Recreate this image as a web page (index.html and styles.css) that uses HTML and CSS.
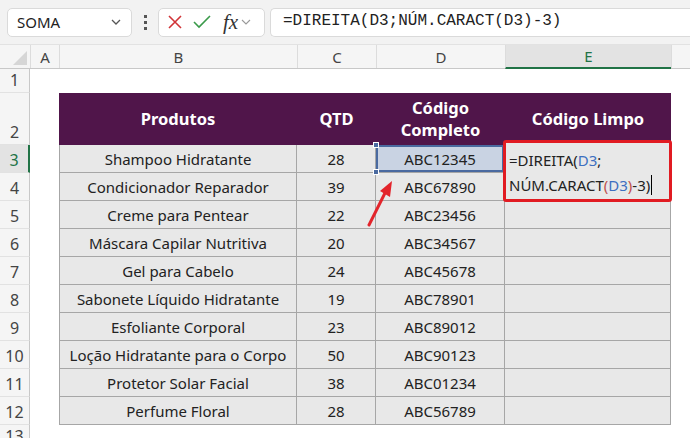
FILE: index.html
```html
<!DOCTYPE html>
<html lang="pt-BR">
<head>
    <meta charset="UTF-8">
    <title>DIREITA + NÚM.CARACT</title>
    <link rel="stylesheet" href="styles.css">
</head>
<body>

    <div class="toolbar">
        <div class="namebox">
            <span>SOMA</span>
            <svg width="14" height="14" viewBox="0 0 14 14"><path d="M3 5l4 4 4-4" fill="none" stroke="#555" stroke-width="1.3"/></svg>
        </div>
        <div class="dots"><i></i><i></i><i></i></div>
        <div class="fxbox">
            <svg width="16" height="16" viewBox="0 0 16 16"><path d="M2 2l12 12M14 2L2 14" stroke="#d13438" stroke-width="1.6"/></svg>
            <svg width="20" height="16" viewBox="0 0 20 16"><path d="M2 8l5 5L18 2" fill="none" stroke="#3a9a4a" stroke-width="1.6"/></svg>
            <span class="fx">fx</span>
            <svg width="10" height="10" viewBox="0 0 10 10"><path d="M1 3l4 4 4-4" fill="none" stroke="#999" stroke-width="1.1"/></svg>
        </div>
        <div class="formula">=DIREITA(D3;NÚM.CARACT(D3)-3)</div>
    </div>

    <div class="sheet">
        <div class="row colheads">
            <div class="corner"><svg width="14" height="14" viewBox="0 0 14 14"><path d="M14 0V14H0z" fill="#d6d6d6"/></svg></div>
            <div>A</div><div>B</div><div>C</div><div>D</div><div class="active">E</div><div></div>
        </div>

        <div class="row r1">
            <div class="rh">1</div>
        </div>

        <div class="row r2">
            <div class="rh">2</div>
            <div></div>
            <div class="th">Produtos</div>
            <div class="th">QTD</div>
            <div class="th">Código<br>Completo</div>
            <div class="th">Código Limpo</div>
        </div>

        <div class="row data">
            <div class="rh current">3</div><div></div>
            <div class="td">Shampoo Hidratante</div><div class="td">28</div>
            <div class="td sel">ABC12345<i class="h1"></i><i class="h2"></i></div><div class="td"></div>
        </div>
        <div class="row data">
            <div class="rh">4</div><div></div>
            <div class="td">Condicionador Reparador</div><div class="td">39</div>
            <div class="td">ABC67890</div><div class="td"></div>
        </div>
        <div class="row data">
            <div class="rh">5</div><div></div>
            <div class="td">Creme para Pentear</div><div class="td">22</div>
            <div class="td">ABC23456</div><div class="td"></div>
        </div>
        <div class="row data">
            <div class="rh">6</div><div></div>
            <div class="td">Máscara Capilar Nutritiva</div><div class="td">20</div>
            <div class="td">ABC34567</div><div class="td"></div>
        </div>
        <div class="row data">
            <div class="rh">7</div><div></div>
            <div class="td">Gel para Cabelo</div><div class="td">24</div>
            <div class="td">ABC45678</div><div class="td"></div>
        </div>
        <div class="row data">
            <div class="rh">8</div><div></div>
            <div class="td">Sabonete Líquido Hidratante</div><div class="td">19</div>
            <div class="td">ABC78901</div><div class="td"></div>
        </div>
        <div class="row data">
            <div class="rh">9</div><div></div>
            <div class="td">Esfoliante Corporal</div><div class="td">23</div>
            <div class="td">ABC89012</div><div class="td"></div>
        </div>
        <div class="row data">
            <div class="rh">10</div><div></div>
            <div class="td">Loção Hidratante para o Corpo</div><div class="td">50</div>
            <div class="td">ABC90123</div><div class="td"></div>
        </div>
        <div class="row data">
            <div class="rh">11</div><div></div>
            <div class="td">Protetor Solar Facial</div><div class="td">38</div>
            <div class="td">ABC01234</div><div class="td"></div>
        </div>
        <div class="row data">
            <div class="rh">12</div><div></div>
            <div class="td">Perfume Floral</div><div class="td">28</div>
            <div class="td">ABC56789</div><div class="td"></div>
        </div>
        <div class="row r13">
            <div class="rh">13</div>
        </div>

        <!-- cell being edited, drawn over E3:E4 -->
        <div class="editor">=DIREITA(<span class="ref">D3</span>;<br>NÚM.CARACT<span class="par">(</span><span class="ref">D3</span><span class="par">)</span>-3)<span class="caret"></span></div>

        <svg class="arrow" width="40" height="60" viewBox="0 0 40 60">
            <path d="M6 50L22 18" stroke="#e3242b" stroke-width="3" stroke-linecap="round"/>
            <path d="M29 6L17 16L27 22z" fill="#e3242b"/>
        </svg>
    </div>

</body>
</html>
```

FILE: styles.css
```css
body {
    margin: 0;
    width: 690px;
    height: 438px;
    overflow: hidden;
    background: #fff;
    font-family: "Noto Sans", Arial, sans-serif;
    color: #222;
}

/* formula bar */
.toolbar {
    display: flex;
    align-items: center;
    height: 44px;
    padding-left: 7px;
    background: #f2f2f2;
    border-bottom: 1px solid #e2e2e2;
}

.namebox {
    display: flex;
    align-items: center;
    justify-content: space-between;
    box-sizing: border-box;
    width: 125px;
    height: 29px;
    padding: 0 8px 0 9px;
    background: #fff;
    border: 1px solid #dadada;
    border-radius: 5px;
    font-size: 15px;
    color: #222;
}

.dots {
    display: flex;
    flex-direction: column;
    gap: 3px;
    margin: 0 11px 0 12px;
}

.dots i {
    display: block;
    width: 3px;
    height: 3px;
    background: #555;
}

.fxbox {
    display: flex;
    align-items: center;
    box-sizing: border-box;
    width: 107px;
    height: 29px;
    padding-left: 8px;
    gap: 9px;
    background: #fff;
    border: 1px solid #dadada;
    border-radius: 5px;
}

.fx {
    font-family: "Liberation Serif", serif;
    font-style: italic;
    font-size: 21px;
    color: #333;
    line-height: 1;
    margin-left: 2px;
}

.fxbox svg:last-child {
    margin-left: -6px;
}

.formula {
    flex: 1;
    box-sizing: border-box;
    height: 29px;
    margin-left: 5px;
    padding: 3px 0 0 12px;
    background: #fff;
    border: 1px solid #dadada;
    border-right: none;
    border-radius: 5px 0 0 5px;
    font-family: "Liberation Mono", monospace;
    font-size: 16px;
    color: #222;
}

/* grid */
.sheet {
    position: relative;
}

.row {
    display: grid;
    grid-template-columns: 30px 29px 238px 79px 129px 166px 1fr;
    height: 28px;
}

.colheads {
    height: 24px;
    background: #f5f5f5;
    border-bottom: 1px solid #c8c8c8;
    box-sizing: border-box;
}

.colheads div {
    display: flex;
    align-items: center;
    justify-content: center;
    font-size: 15px;
    color: #444;
    border-left: 1px solid #dcdcdc;
}

.colheads .corner {
    border-left: none;
    justify-content: flex-end;
    align-items: flex-end;
    padding: 0 3px 3px 0;
}

.colheads .active {
    background: #e3e3e3;
    color: #217346;
    border-bottom: 2px solid #217346;
    margin-bottom: -1px;
}

.rh {
    display: flex;
    align-items: flex-end;
    justify-content: center;
    padding-bottom: 1px;
    box-sizing: border-box;
    background: #f5f5f5;
    border-right: 1px solid #c8c8c8;
    border-bottom: 1px solid #e2e2e2;
    font-size: 16px;
    color: #444;
}

.rh.current {
    background: #e3e3e3;
    color: #217346;
    border-right: 2px solid #217346;
}

.r1 {
    height: 24px;
}

.r2 {
    height: 52px;
}

.th {
    display: flex;
    align-items: center;
    justify-content: center;
    text-align: center;
    background: #50154a;
    color: #fff;
    font-weight: bold;
    font-size: 16.5px;
    line-height: 22px;
}

.td {
    display: flex;
    align-items: center;
    justify-content: center;
    background: #e8e8e8;
    border-right: 1px solid #a6a6a6;
    border-bottom: 1px solid #a6a6a6;
    font-size: 15px;
    color: #222;
}

.data .td:nth-child(3) {
    border-left: 1px solid #a6a6a6;
}

.td.sel {
    position: relative;
    background: #c9d3e3;
    box-shadow: inset 0 0 0 2px #4a6aa0;
}

.td.sel i {
    position: absolute;
    left: -3px;
    width: 6px;
    height: 6px;
    background: #4a6aa0;
    border: 1px solid #fff;
    box-sizing: border-box;
}

.td.sel .h1 { top: -3px; }
.td.sel .h2 { bottom: -3px; }

.r13 {
    height: 20px;
}

.editor {
    position: absolute;
    left: 503px;
    top: 95px;
    width: 169px;
    height: 62px;
    box-sizing: border-box;
    padding: 5px 0 0 3px;
    background: #e8e8e8;
    border: 3px solid #e11b22;
    border-radius: 3px;
    font-size: 15px;
    line-height: 25px;
    color: #222;
}

.editor .ref { color: #3d6fc0; }
.editor .par { color: #c0504d; }

.caret {
    display: inline-block;
    width: 1px;
    height: 20px;
    margin-left: 1px;
    background: #000;
    vertical-align: -4px;
}

.arrow {
    position: absolute;
    left: 363px;
    top: 130px;
}
```
